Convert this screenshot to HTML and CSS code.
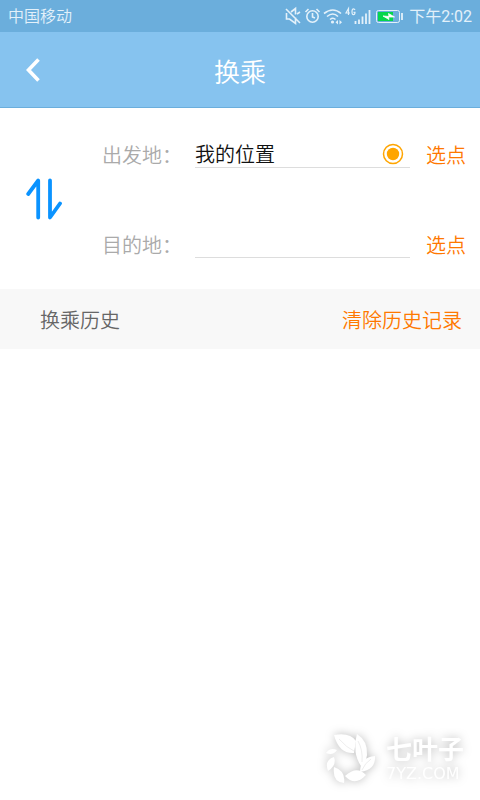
FILE: index.html
```html
<!DOCTYPE html>
<html lang="zh-CN">
<head>
<meta charset="utf-8">
<meta name="viewport" content="width=device-width, initial-scale=1">
<title>换乘</title>
<link rel="stylesheet" href="styles.css">
</head>
<body>
<div class="status">
  <span class="carrier">中国移动</span>
  <div class="indicators">
    <svg width="118" height="20" viewBox="0 0 118 20" fill="none" stroke="#e3f1fa" stroke-width="1.6" aria-hidden="true">
      <path d="M1.500 7v6h3l6 4.500v-6M6 6l4.500-3.500v6M1 3l14 14M12 8l3-2"/>
      <circle cx="27.500" cy="10.500" r="5.700"/>
      <path d="M27.500 7v4l2.500 1M20.500 6l3-3M34.500 6l-3-3"/>
      <path d="M39 7.500q9-7 17 0M42 10.500q6-5 11 0M45 13.500q3-2.500 5.500 0"/>
      <circle cx="47.500" cy="16" r="1.600" fill="#e3f1fa" stroke="none"/>
      <path d="M53 14l-2.500 2.200 2.500 2.200zM54.500 14l2.500 2.200-2.500 2.200z" fill="#e3f1fa" stroke="none"/>
      <path d="M63.500 9V2.500L61 7h4M70 4q-.500-1.200-1.500-1.200-1.500 0-1.500 3t1.500 2.800q1.500 0 1.500-2.300h-1.500" stroke-width="1.200"/>
      <path d="M70.500 15v3M74 13.500v4.500M77.500 10.500v7.500M81 7.500v10.500M84.500 4v14" stroke-width="1.800"/>
      <rect x="91.500" y="4.500" width="23" height="12" rx="2" stroke-width="1"/>
      <path d="M93 6h15v9H93z" fill="#06d64c" stroke="none"/>
      <path d="M98 10l6 .500-.500-3 6 3.500-6 0 .500 2.500z" fill="#fff" stroke="#fff" stroke-width=".8"/>
      <path d="M117 7v7" stroke-width="1.800"/>
    </svg>
    <span class="clock">下午2:02</span>
  </div>
</div>
<header class="header">
  <button class="back" type="button" aria-label="返回">
    <svg width="14" height="24" viewBox="0 0 14 24" fill="none" stroke="#fff" stroke-width="3.600" aria-hidden="true"><path d="M12.500 1.500L2.500 12l10 10.500"/></svg>
  </button>
  <h1 class="title">换乘</h1>
</header>
<main>
  <form class="route">
    <button class="swap" type="button" aria-label="交换">
      <svg width="36" height="42" viewBox="0 0 36 42" fill="none" stroke="#0a93ff" stroke-width="3.800" stroke-linecap="round" stroke-linejoin="round" aria-hidden="true"><path d="M2.200 16L12.200 2.500V39.500M24 2.500V39.500L34 25.500"/></svg>
    </button>
    <div class="fields">
      <div class="row">
        <label class="label" for="from">出发地：</label>
        <div class="box">
          <input class="input" id="from" type="text" value="我的位置">
          <svg class="locate" width="22" height="22" viewBox="0 0 22 22" aria-hidden="true"><circle cx="11" cy="11" r="9.500" fill="none" stroke="#ffa500" stroke-width="1.500"/><circle cx="11" cy="11" r="6.200" fill="#ffa500"/></svg>
        </div>
        <button class="pick" type="button">选点</button>
      </div>
      <div class="row">
        <label class="label" for="to">目的地：</label>
        <div class="box">
          <input class="input" id="to" type="text">
        </div>
        <button class="pick" type="button">选点</button>
      </div>
    </div>
  </form>
  <section class="history">
    <h2 class="subtitle">换乘历史</h2>
    <button class="clear" type="button">清除历史记录</button>
  </section>
</main>
<div class="mark">
  <svg width="50" height="52" viewBox="0 0 50 52" fill="#fff" aria-hidden="true">
    <path d="M8 2Q24-1 30 8L28 20Q13 21 8 2z"/>
    <path d="M31 1Q42 8 41 22Q40 30 35 33Q26 20 31 1z"/>
    <path d="M49 23Q50 37 34 39Q34 24 49 23z"/>
    <path d="M19 43Q31 32 40 42Q29 54 19 43zM8 34Q20 38 18 50Q6 49 8 34zM2 38Q-2 27 8 24Q11 32 2 38zM0 20Q4 14 11 17Q7 23 0 20z"/>
    <path d="M13 6Q21 15 28 18M32 8Q37 17 36 29M45 26Q39 30 36 37" fill="none" stroke="#eee" stroke-width="1"/>
  </svg>
  <div class="brand">
    <span class="name">七叶子</span>
    <span class="site">7YZ.COM</span>
  </div>
</div>
</body>
</html>
```
FILE: styles.css
```css
* { box-sizing: border-box; }
body {
  margin: 0;
  min-height: 100vh;
  display: flex;
  flex-direction: column;
  background: #fff;
  font-family: Roboto, "Noto Sans CJK SC", sans-serif;
  font-weight: 350;
  font-size: 20px;
  line-height: 28px;
}
main { flex: 1; }
button, input {
  font: inherit;
  padding: 0;
  border: 0;
  background: none;
}
h1, h2 { margin: 0; font-size: inherit; font-weight: inherit; }
svg { display: block; flex: none; }
.status {
  display: flex;
  align-items: center;
  justify-content: space-between;
  height: 32px;
  padding: 2px 8px 0;
  background: #6baedc;
  color: #e3f1fa;
  font-size: 16px;
}
.indicators { display: flex; align-items: center; gap: 6px; }
.indicators svg { margin-bottom: 2px; }
.clock { font-size: 16px; font-weight: 400; }
.header {
  display: grid;
  grid-template-columns: 68px 1fr 68px;
  align-items: center;
  height: 76px;
  background: #86c3ef;
  border-bottom: 1px solid #6baedc;
  color: #fff;
}
.back { display: flex; padding: 12px 26px; }
.title { text-align: center; font-size: 26px; line-height: 40px; padding-top: 6px; }
.route {
  display: flex;
  align-items: center;
  padding: 32px 0 29px;
}
.swap { flex: none; width: 102px; padding: 0 0 2px 26px; }
.fields { flex: 1; min-width: 0; display: flex; flex-direction: column; gap: 60px; }
.row { display: flex; }
.label { flex: none; width: 93px; padding-top: 2px; color: #aaa; }
.box {
  flex: 1;
  min-width: 0;
  display: flex;
  align-items: center;
  margin-bottom: 2px;
  border-bottom: 1px solid #ddd;
}
.input {
  flex: 1;
  min-width: 0;
  height: 27px;
  padding-top: 3px;
  color: #111;
  outline: none;
}
.locate { margin-right: 6px; }
.pick { flex: none; width: 70px; padding: 2px 0 0 16px; text-align: left; color: #ff7800; }
.history {
  display: flex;
  align-items: center;
  justify-content: space-between;
  height: 60px;
  padding: 3px 18px 0 40px;
  background: #f8f8f8;
  color: #666;
}
.clear { color: #ff7800; }
.mark {
  display: flex;
  align-items: center;
  gap: 10px;
  align-self: flex-end;
  padding: 0 16px 15px 0;
  color: #fff;
  filter: drop-shadow(0 0 5px #bbb);
}
.brand { display: flex; flex-direction: column; }
.name { font-size: 26px; line-height: 30px; font-weight: 700; }
.site { font-family: "DejaVu Sans", sans-serif; font-size: 16px; line-height: 18px; font-weight: 400; }
```
